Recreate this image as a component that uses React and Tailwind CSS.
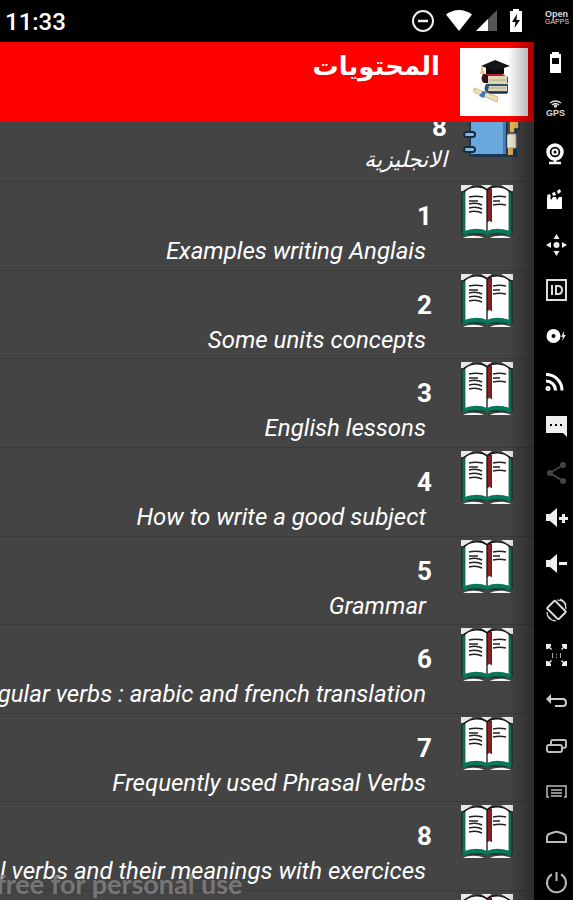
import React from 'react';

// --- Lesson list ---
const lessons = [
  { id: 1, title: 'Examples writing Anglais' },
  { id: 2, title: 'Some units concepts' },
  { id: 3, title: 'English lessons' },
  { id: 4, title: 'How to write a good subject' },
  { id: 5, title: 'Grammar' },
  { id: 6, title: 'Irregular verbs : arabic and french translation' },
  { id: 7, title: 'Frequently used Phrasal Verbs' },
  { id: 8, title: 'Phrasal verbs and their meanings with exercices' },
];

// --- Pictures ---
const BookIcon = () => (
  <svg className="w-[52px] h-[54px] shrink-0" viewBox="0 0 52 54" fill="none">
    <path d="M0 0h12L2 6H0zM20 0h11l-5 4zM40 0h12v6h-2z" fill="#e8e8e8" />
    <path d="M1 7h50v42H1z" fill="#08775a" stroke="#12231f" strokeWidth="1" />
    <path d="M4 6C10 0 21 1 26 5c5-4 16-5 22 1v40c-7-2-15-2-22 1-7-3-15-3-22-1z" fill="#fff" />
    <path d="M3 7C10 0 21 1 26 5c5-4 16-5 23 2" stroke="#151515" strokeWidth="1.5" />
    <path d="M4 7v39M48 7v39" stroke="#444" strokeWidth="0.8" />
    <path d="M2 49c8-4 17-4 24-1 7-3 16-3 24 1" stroke="#08775a" strokeWidth="4" />
    <path d="M2 53c5-3 16-3 21 0zM29 53c5-3 16-3 21 0z" fill="#f4f4f4" />
    <path d="M26 5v41" stroke="#333" strokeWidth="1.5" />
    <path d="M26.500 4h4v33l-2-2-2 2z" fill="#8b1f27" stroke="#2a1013" strokeWidth="0.8" />
    <path d="M8 12c4-1 9-1 14 0M8 16h9M8 19c4-1 9-1 13 1M8 23c4-1 9-1 13 1M8 27c4-1 9-1 13 1M32 12c4-1 9-1 13 0M32 16h7M32 20c4-1 9-1 13 0" stroke="#222" strokeWidth="1.6" />
  </svg>
);

const NotebookIcon = () => (
  <svg className="w-[57px] h-[60px] shrink-0" viewBox="0 0 57 60" fill="none">
    <path d="M8 1h46v57H8z" fill="#183653" />
    <path d="M45 1h5v55h-5z" fill="#d9a953" />
    <path d="M46 16h10v14h-4v4h-6z" fill="#edb954" stroke="#183653" strokeWidth="1.5" />
    <path d="M44 36l3-1h6v14h-9z" fill="#eee6d4" stroke="#ae9e80" />
    <path d="M7 2h36v54H7z" fill="#69a8dd" stroke="#173754" strokeWidth="2" />
    <path d="M40 3h3v52h-3z" fill="#4d7ba6" />
    <rect x="1" y="33" width="11" height="5" rx="2.5" fill="#8bb7d2" stroke="#122c45" strokeWidth="2" />
    <rect x="1" y="48" width="11" height="5" rx="2.5" fill="#8bb7d2" stroke="#122c45" strokeWidth="2" />
  </svg>
);

const GraduationLogo = () => (
  <svg className="w-[68px] h-[68px]" viewBox="0 0 68 68" fill="none">
    <path d="M23 26h19l6 3v6H25l-2-3z" fill="#b51e28" />
    <path d="M26 28h21v8H27c-2-2-2-5-1-8z" fill="#ddd5b4" />
    <path d="M23 26c-2 3-2 7 1 9h4v-8z" fill="#351014" />
    <path d="M26 36h22v9H27c-3-2-3-6-1-9z" fill="#30536b" />
    <path d="M29 38h18v5H28z" fill="#d9d4bd" />
    <path d="M26 45h21" stroke="#1c2c38" strokeWidth="1.5" />
    <path d="M29 32h17M30 40h16" stroke="#a89d78" strokeWidth="0.8" />
    <path d="M14 40l24 9-1 5-23-10z" fill="#ecdfb9" stroke="#c8ae72" strokeWidth="0.8" />
    <path d="M23 43l3 1-2 6-5-2z" fill="#3279c4" />
    <path d="M26 17v9h18v-9l-9 3z" fill="#080808" />
    <path d="M35 12l15 6-15 5-14-5z" fill="#151515" />
    <path d="M22 18v8" stroke="#e4b56c" strokeWidth="1.5" />
    <path d="M20 24l4-2 1 4h-5z" fill="#e9c491" />
  </svg>
);

const StatusIcons = () => (
  <div className="flex items-center">
    <svg className="w-[24px] h-[24px]" viewBox="0 0 24 24" fill="none" stroke="#eee" strokeWidth="2">
      <circle cx="12" cy="12" r="10" />
      <path d="M7 12h10" strokeWidth="2.5" />
    </svg>
    <svg className="w-[26px] h-[24px] ml-[11px]" viewBox="0 0 26 24" fill="#fff">
      <path d="M0 5.500C8-.5 18-.5 26 5.500L13 22z" />
    </svg>
    <svg className="w-[22px] h-[24px] ml-1" viewBox="0 0 22 24">
      <path d="M0 22L21 1v21z" fill="#555" />
      <path d="M0 22L12 10v12z" fill="#fff" />
    </svg>
    <svg className="w-[14px] h-[24px] ml-[11px]" viewBox="0 0 14 24">
      <path d="M4 0h6v2h3v21H1V2h3z" fill="#fff" />
      <path d="M8 5l-5 8h3.500L5.500 19l5.500-8H7.500z" fill="#000" />
    </svg>
  </div>
);

// --- Emulator toolbar ---
const tools = [
  {
    name: 'Open GApps',
    art: (
      <g fill="#ddd" fontFamily="Liberation Sans">
        <text x="0" y="12" fontWeight="bold" fontSize="9">Open</text>
        <text x="0" y="19" fontSize="7">GAPPS</text>
      </g>
    ),
  },
  {
    name: 'Battery',
    art: <path d="M7 1h7v2h2v19H5V3h2zM7 7v6h7V7z" fill="#fff" fillRule="evenodd" />,
  },
  {
    name: 'GPS',
    art: (
      <g fill="none" stroke="#ddd" strokeWidth="1.5">
        <path d="M5 7q5.500-4 11 0M7 9q3.500-3 7 0" />
        <circle cx="10.5" cy="10" r="1" />
        <text x="1" y="20" fill="#ddd" stroke="none" fontFamily="Liberation Sans" fontWeight="bold" fontSize="9">GPS</text>
      </g>
    ),
  },
  {
    name: 'Camera',
    art: (
      <g fill="none" stroke="#fff">
        <circle cx="10" cy="10" r="7" strokeWidth="3.5" />
        <circle cx="10" cy="10" r="2.5" strokeWidth="2" />
        <path d="M10 17v3M4 21h12" strokeWidth="2.5" />
      </g>
    ),
  },
  {
    name: 'Screen capture',
    art: (
      <g fill="#fff">
        <path d="M2 10h3l1 3 2-3h3l1 3 2-3h3v12H2z" />
        <path d="M2 8l3-1 1 3-3 1zM7 6l3-1 1 3-3 1zM12 4l3-2 1 3-3 2z" />
      </g>
    ),
  },
  {
    name: 'Move',
    art: (
      <g fill="#eee">
        <circle cx="11.5" cy="12" r="3" />
        <path d="M11.500 1l3 5h-6zM11.500 23l3-5h-6zM1 12l5-3v6zM22 12l-5-3v6z" />
      </g>
    ),
  },
  {
    name: 'Identifiers',
    art: (
      <g fill="none" stroke="#ddd" strokeWidth="2">
        <rect x="2" y="2" width="19" height="20" />
        <path d="M7 7v10M11 8v8h2q4 0 4-4t-4-4z" />
      </g>
    ),
  },
  {
    name: 'Disk',
    art: (
      <g>
        <circle cx="8.5" cy="12" r="4.5" fill="none" stroke="#fff" strokeWidth="5" />
        <path d="M19 7l-3 6h2l-1 4 4-6h-2z" fill="#ddd" />
      </g>
    ),
  },
  {
    name: 'Network',
    art: (
      <g fill="none" stroke="#fff" strokeWidth="3">
        <path d="M1 4.500c9 0 16 7 16 16M1 11c5 0 9.500 4 9.500 9.500" />
        <circle cx="3" cy="18.5" r="1" />
      </g>
    ),
  },
  {
    name: 'Messages',
    art: (
      <g>
        <path d="M1 1h21v21l-4-4H1z" fill="#eee" />
        <path d="M5 9h2v2H5zM10 9h2v2h-2zM15 9h2v2h-2z" fill="#000" />
      </g>
    ),
  },
  {
    name: 'Share',
    art: (
      <g fill="#444" stroke="#444" strokeWidth="2">
        <path d="M18 4L5 12l13 8" fill="none" />
        <circle cx="18" cy="4" r="2" />
        <circle cx="5" cy="12" r="2" />
        <circle cx="18" cy="20" r="2" />
      </g>
    ),
  },
  {
    name: 'Volume up',
    art: <path d="M1 8h4l7-6v19l-7-6H1zM14 11h3V8h3v3h3v3h-3v3h-3v-3h-3z" fill="#eee" />,
  },
  {
    name: 'Volume down',
    art: <path d="M1 8h4l7-6v19l-7-6H1zM14 10h8v3h-8z" fill="#eee" />,
  },
  {
    name: 'Rotate',
    art: (
      <g fill="none" stroke="#ddd" strokeWidth="1.5">
        <rect x="6" y="4" width="11" height="16" rx="1" transform="rotate(-45 11.500 12)" strokeWidth="2" />
        <path d="M12 2q9 0 9 9M2 14q0 8 9 9M15 1q5 2 6 6M3 18q3 4 6 5" strokeWidth="1.2" />
      </g>
    ),
  },
  {
    name: 'Pixel perfect',
    art: (
      <g fill="#eee">
        <path d="M1 1h5v2L5 4l2 2-1 1-2-2-1 1H1zM22 1h-5v2l1 1-2 2 1 1 2-2 1 1h2zM1 23h5v-2l-1-1 2-2-1-1-2 2-1-1H1zM22 23h-5v-2l1-1-2-2 1-1 2 2 1-1h2z" />
        <path d="M7 10h1v5H7zM11 11h1v1h-1zM11 14h1v1h-1zM15 10h1v5h-1z" fill="#aaa" />
      </g>
    ),
  },
  {
    name: 'Back',
    art: (
      <g>
        <path d="M4 10h14q3 0 3 3.500T18 17h-8" fill="none" stroke="#ccc" strokeWidth="2" />
        <path d="M1 10l5-5v10z" fill="#ccc" />
      </g>
    ),
  },
  {
    name: 'Recent apps',
    art: (
      <g fill="none" stroke="#bbb" strokeWidth="2">
        <rect x="2" y="11" width="15" height="7" rx="2" />
        <path d="M6 10V8q0-2 2-2h12q1 0 1 2v4q0 2-3 2" />
      </g>
    ),
  },
  {
    name: 'Menu',
    art: <path d="M4 17H2V6h19v11h-2M6 10h11M6 13h11M6 16h11" fill="none" stroke="#bbb" strokeWidth="1.5" />,
  },
  {
    name: 'Home',
    art: <path d="M2 17v-5q0-2 2-3l6-2q1.500-.5 3 0l6 2q2 1 2 3v5z" fill="none" stroke="#bbb" strokeWidth="2" />,
  },
  {
    name: 'Power',
    art: <path d="M7 3.500a9.500 9.500 0 1 0 9 0M11.500 1v9" fill="none" stroke="#bbb" strokeWidth="2" />,
  },
];

const Toolbar = () => (
  <nav aria-label="Device tools" className="w-[39px] shrink-0 bg-black flex flex-col items-end justify-between py-[5px] pr-1">
    {tools.map((tool) => (
      <button key={tool.name} type="button" aria-label={tool.name} className="block">
        <svg className="w-6 h-6 overflow-visible" viewBox="0 0 24 24">{tool.art}</svg>
      </button>
    ))}
  </nav>
);

// --- Row of the list ---
const LessonRow = ({ lesson }) => (
  <li className="flex-1 basis-0 min-h-0 border-t border-[#393939]">
    <button type="button" className="w-full flex items-start justify-end pr-[21px] pt-[3px]">
      <span className="flex-1 min-w-0 flex flex-col items-end overflow-hidden pt-[13px] pr-[29px]">
        <span className="text-[26px] leading-[36px] font-bold">{lesson.id}</span>
        <span className="text-[24px] leading-[34px] italic whitespace-nowrap pr-[6px]">{lesson.title}</span>
      </span>
      <BookIcon />
    </button>
  </li>
);

export default function App() {
  return (
    <div className="h-screen flex overflow-hidden bg-black text-white font-['Roboto','DejaVu_Sans',sans-serif]">
      <div className="flex-1 min-w-0 flex flex-col">
        {/* Status bar */}
        <div className="h-[42px] shrink-0 flex items-center justify-between pl-[5px] pr-[11px]">
          <span className="text-[24px] leading-[32px] font-medium pt-[2px]">11:33</span>
          <StatusIcons />
        </div>

        <main className="relative flex-1 min-h-0 flex flex-col bg-[#444]">
          <header className="h-[80px] shrink-0 bg-[#ff0000] flex items-start justify-end pt-[6px] pr-[6px]">
            <h1 lang="ar" dir="rtl" className="text-[26px] leading-[36px] font-bold mr-[20px]">المحتويات</h1>
            <div className="bg-white">
              <GraduationLogo />
            </div>
          </header>

          {/* Scrolled list */}
          <div className="h-[59px] shrink-0 overflow-hidden flex items-end justify-end pr-[14px]">
            <div className="flex flex-col items-end pr-[16px] pb-[6px]">
              <span className="text-[26px] leading-[36px] font-bold">8</span>
              <span lang="ar" dir="rtl" className="text-[22px] leading-[30px] italic">الانجليزية</span>
            </div>
            <div className="pb-[22px]">
              <NotebookIcon />
            </div>
          </div>
          <ul className="flex-1 min-h-0 flex flex-col">
            {lessons.map((lesson) => (
              <LessonRow key={lesson.id} lesson={lesson} />
            ))}
          </ul>
          <div className="h-[10px] shrink-0 overflow-hidden flex justify-end items-start border-t border-[#393939] pt-[3px] pr-[21px]">
            <BookIcon />
          </div>

          <p className="absolute left-0 bottom-0 -ml-[4px] text-[27px] leading-[32px] font-bold text-[#858585]/80 font-['Lato',sans-serif] whitespace-nowrap pointer-events-none">
            free for personal use
          </p>
          <div className="absolute inset-y-0 right-0 w-[26px] bg-linear-to-r from-transparent to-black/35 pointer-events-none"></div>
        </main>
      </div>
      <Toolbar />
    </div>
  );
}
